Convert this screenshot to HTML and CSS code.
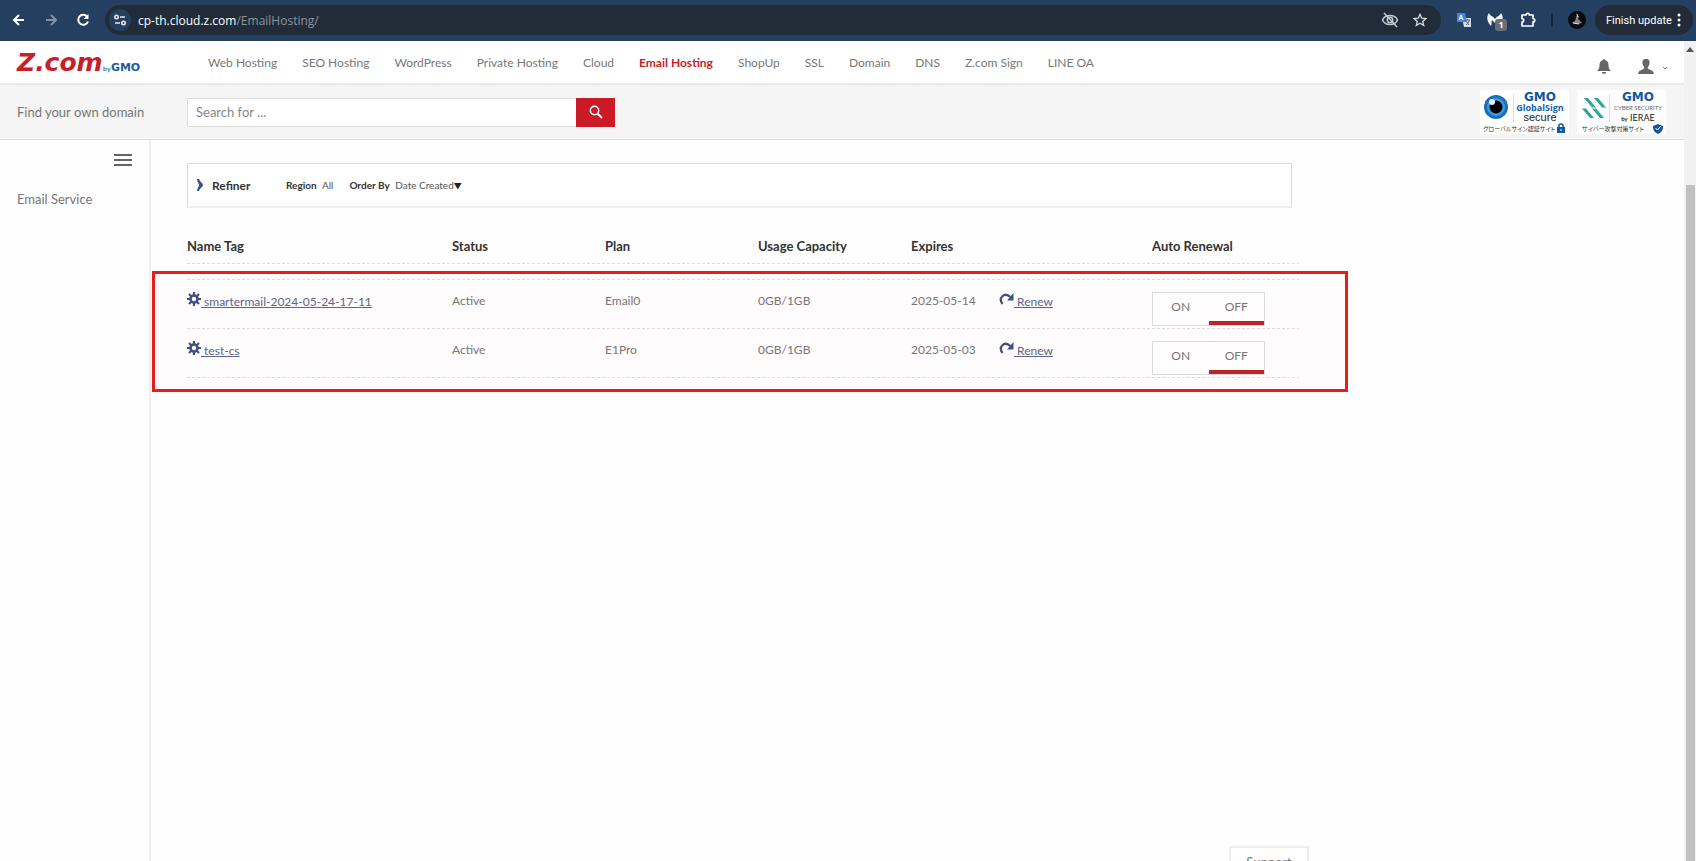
FILE: index.html
```html
<!doctype html>
<html lang="en">
	<head>
		<meta charset="UTF-8">
		<meta name="viewport" content="width=device-width, initial-scale=1.0">
		<title>Email Hosting</title>
		<link rel="stylesheet" href="styles.css">
	</head>

	<body>

		<!-- browser bar -->
		<div class="browser">
			<button type="button" class="bbtn" aria-label="Back"><svg width="14" height="14" viewBox="0 0 14 14"><path d="M12 7H2M7 2L2 7l5 5" fill="none" stroke="#fff" stroke-width="2"/></svg></button>
			<button type="button" class="bbtn" aria-label="Forward"><svg width="14" height="14" viewBox="0 0 14 14"><path d="M2 7h10M7 2l5 5-5 5" fill="none" stroke="#8493a6" stroke-width="2"/></svg></button>
			<button type="button" class="bbtn" aria-label="Reload"><svg width="14" height="14" viewBox="0 0 14 14"><path d="M12 8.500A5 5 0 1 1 11 3.500" fill="none" stroke="#fff" stroke-width="2"/><path d="M12.500 1v5h-5z" fill="#fff"/></svg></button>
			<div class="url">
				<span class="site"><svg width="14" height="14" viewBox="0 0 14 14" fill="none" stroke="#e3e8ee" stroke-width="1.600"><circle cx="3.500" cy="4" r="1.700"/><path d="M7 4h5M2 10h5"/><circle cx="10.500" cy="10" r="1.700"/></svg></span>
				<span class="address"><b>cp-th.cloud.z.com</b>/EmailHosting/</span>
				<svg width="18" height="18" viewBox="0 0 18 18" fill="none" stroke="#c3c9d0" stroke-width="1.500"><path d="M1.500 9C4 3 14 3 16.500 9 14 15 4 15 1.500 9z"/><circle cx="9" cy="9" r="2.700"/><path d="M3 2l13 14"/></svg>
				<svg width="14" height="14" viewBox="0 0 14 14"><path d="M7 1.300l1.700 3.900 4.200.4-3.200 2.800 1 4.100L7 10.300l-3.700 2.200 1-4.100L1.100 5.600l4.200-.4z" fill="none" stroke="#d5dae0" stroke-width="1.300"/></svg>
			</div>
			<div class="ext">
				<svg width="16" height="16" viewBox="0 0 16 16"><path d="M6 6h9v9H8z" fill="#d8dee8"/><path d="M1 1h8l2 9H1z" fill="#4a84e0"/><path d="M3 8l2-5 2 5M4 6.500h2" stroke="#fff" fill="none"/><path d="M9 8h5M11.500 7v1M13 8c0 3-2 4-3 5M10 9l3 4" stroke="#596579" fill="none"/></svg>
				<span class="mb">
					<svg width="16" height="14" viewBox="0 0 16 14"><path d="M2 0c1 3 4 3 6 6 2-3 5-3 6-6 3 4 2 9-2 13-1-2 0-4-1-6L8 10 5 7c-1 2 0 4-1 6C0 9-1 4 2 0z" fill="#f4f7fa"/></svg>
					<span class="count">1</span>
				</span>
				<svg width="16" height="16" viewBox="0 0 16 16"><path d="M2 3h4a1.700 1.700 0 0 1 3.400 0H13v3.500a1.700 1.700 0 0 1 0 3.400V14H2v-4a1.700 1.700 0 0 0 0-3.400z" fill="none" stroke="#fff" stroke-width="1.700" stroke-linejoin="round"/></svg>
				<span class="bar"></span>
				<svg width="18" height="18" viewBox="0 0 18 18"><circle cx="9" cy="9" r="9" fill="#0b0c12"/><path d="M9 3l2 3-1 2 4 4-4 1-6-1 3-2 1-3z" fill="#8e8284"/><path d="M9 3l1 3M5 12l6 1" stroke="#e4d9d2"/></svg>
			</div>
			<button type="button" class="update">Finish update
				<svg width="4" height="14" viewBox="0 0 4 14" fill="#fff"><circle cx="2" cy="2" r="1.500"/><circle cx="2" cy="7" r="1.500"/><circle cx="2" cy="12" r="1.500"/></svg>
			</button>
		</div>

		<div class="view">
		<div class="page">

			<header>
				<a href="#" class="logo"><span class="z">Z.com</span><span class="by">by</span><span class="gmo">GMO</span></a>
				<nav>
					<a href="#">Web Hosting</a>
					<a href="#">SEO Hosting</a>
					<a href="#">WordPress</a>
					<a href="#">Private Hosting</a>
					<a href="#">Cloud</a>
					<a href="#" class="active">Email Hosting</a>
					<a href="#">ShopUp</a>
					<a href="#">SSL</a>
					<a href="#">Domain</a>
					<a href="#">DNS</a>
					<a href="#">Z.com Sign</a>
					<a href="#">LINE OA</a>
				</nav>
				<div class="user">
					<button type="button" aria-label="Notifications"><svg width="14" height="15" viewBox="0 0 14 15" fill="#666"><path d="M7 0c1 0 1 1 1 1.200 3 .6 3.500 3 3.500 5.300 0 3 1 4 2.500 5.500H0C1.500 10.500 2.500 9.500 2.500 6.500 2.500 4.200 3 1.800 6 1.200 6 1 6 0 7 0zM5 13h4c0 2.600-4 2.600-4 0z"/></svg></button>
					<button type="button" aria-label="Account"><svg width="16" height="15" viewBox="0 0 16 15" fill="#666"><path d="M8 0c3 0 4 2 3.500 4.500C11.200 6.500 10.500 7.500 9.800 8v1.500c1 1 5.700 1.500 6.200 5.500H0c.5-4 5.200-4.500 6.200-5.500V8C5.500 7.500 4.800 6.500 4.500 4.500 4 2 5 0 8 0z"/></svg>
					<svg class="caret" width="6" height="4" viewBox="0 0 6 4"><path d="M1 1l2 2 2-2" fill="none" stroke="#888"/></svg></button>
				</div>
			</header>

			<form class="find">
				<label for="domain">Find your own domain</label>
				<input type="text" id="domain" placeholder="Search for ...">
				<button type="button" aria-label="Search"><svg width="14" height="14" viewBox="0 0 14 14" fill="none" stroke="#fff"><circle cx="5.500" cy="5.500" r="4.200" stroke-width="1.400"/><path d="M8.500 8.500l4.500 4.500" stroke-width="2"/></svg></button>
				<div class="seals">
					<svg width="89" height="44" viewBox="0 0 89 44">
						<rect width="89" height="44" fill="#fff"/>
						<circle cx="16" cy="17" r="12" fill="#1b6fb8"/><circle cx="16" cy="17" r="9" fill="#3d9be0"/><circle cx="16" cy="17" r="6.500" fill="#000"/><circle cx="12" cy="12" r="3" fill="#e8f5ff"/>
						<path d="M33.500 4v28" stroke="#ddd"/>
						<text x="60" y="11" class="s-gmo">GMO</text>
						<text x="60" y="21" class="s-sign">GlobalSign</text>
						<text x="60" y="31" class="s-secure">secure</text>
						<text x="3" y="41" class="s-jp">グローバルサイン認証サイト</text>
						<path d="M77 37h8v6h-8z" fill="#12589f"/><path d="M79 37v-1.500c0-2 4-2 4 0V37" fill="none" stroke="#12589f" stroke-width="1.500"/><path d="M81 39v2" stroke="#fff"/>
					</svg>
					<svg width="89" height="44" viewBox="0 0 89 44">
						<rect width="89" height="44" fill="#fff"/>
						<path d="M7 8h4l8 9.500h-4zM17 8h4l8 9.500h-4zM5 18.500h4l8 9.500h-4zM15 18.500h4l8 9.500h-4z" fill="#2ea3a0"/>
						<path d="M32.500 4v28" stroke="#ddd"/>
						<text x="61" y="11" class="s-gmo">GMO</text>
						<text x="61" y="20" class="s-cyber">CYBER SECURITY</text>
						<text x="61" y="31" class="s-ierae"><tspan class="s-by">by</tspan> IERAE</text>
						<text x="5" y="41" class="s-jp">サイバー攻撃対策サイト</text>
						<path d="M81 34l5 2c0 4-1 6-5 8-4-2-5-4-5-8z" fill="#12589f"/><path d="M78.500 38l2 2 3-3.500" fill="none" stroke="#fff"/>
					</svg>
				</div>
			</form>

			<div class="body">
				<aside>
					<button type="button" class="burger" aria-label="Menu"><svg width="18" height="12" viewBox="0 0 18 12"><path d="M0 1h18M0 6h18M0 11h18" stroke="#666" stroke-width="2"/></svg></button>
					<a href="#">Email Service</a>
				</aside>

				<main>
					<div class="refiner">
						<svg width="6" height="12" viewBox="0 0 6 12"><path d="M0 0h2c1 3 4 4 4 6s-3 3-4 6H0c0-3 2-4 2-6S0 3 0 0z" fill="#3b5190"/></svg>
						<strong>Refiner</strong>
						<span class="opt"><b>Region</b> <span>All</span></span>
						<span class="opt"><b>Order By</b> <span>Date Created<i>▼</i></span></span>
					</div>

					<div class="list">
						<table>
							<colgroup><col class="c-name"><col class="c-mid"><col class="c-mid"><col class="c-mid"><col class="c-exp"><col class="c-mid"><col></colgroup>
							<thead>
								<tr><th>Name Tag</th><th>Status</th><th>Plan</th><th>Usage Capacity</th><th>Expires</th><th></th><th>Auto Renewal</th></tr>
							</thead>
							<tbody>
								<tr class="gap"><td colspan="7"></td></tr>
								<tr>
									<td><a href="#"><svg width="14" height="14" viewBox="0 0 14 14"><circle cx="7" cy="7" r="3.500" fill="none" stroke="#3f5185" stroke-width="2.600"/><path d="M7 0v3M7 11v3M0 7h3M11 7h3M2 2l2.200 2.200M9.800 9.800L12 12M12 2L9.800 4.200M4.200 9.800L2 12" stroke="#3f5185" stroke-width="2.200"/></svg> smartermail-2024-05-24-17-11</a></td>
									<td>Active</td><td>Email0</td><td>0GB/1GB</td><td>2025-05-14</td>
									<td><a href="#"><svg width="15" height="14" viewBox="0 0 15 14"><path d="M3.500 12C-1 6 5-.5 11.500 5" fill="none" stroke="#3f5185" stroke-width="2.200"/><path d="M14.500 1v7.500H8z" fill="#3f5185"/></svg> Renew</a></td>
									<td><div class="toggle"><button type="button">ON</button><button type="button" class="on">OFF</button></div></td>
								</tr>
								<tr>
									<td><a href="#"><svg width="14" height="14" viewBox="0 0 14 14"><circle cx="7" cy="7" r="3.500" fill="none" stroke="#3f5185" stroke-width="2.600"/><path d="M7 0v3M7 11v3M0 7h3M11 7h3M2 2l2.200 2.200M9.800 9.800L12 12M12 2L9.800 4.200M4.200 9.800L2 12" stroke="#3f5185" stroke-width="2.200"/></svg> test-cs</a></td>
									<td>Active</td><td>E1Pro</td><td>0GB/1GB</td><td>2025-05-03</td>
									<td><a href="#"><svg width="15" height="14" viewBox="0 0 15 14"><path d="M3.500 12C-1 6 5-.5 11.500 5" fill="none" stroke="#3f5185" stroke-width="2.200"/><path d="M14.500 1v7.500H8z" fill="#3f5185"/></svg> Renew</a></td>
									<td><div class="toggle"><button type="button">ON</button><button type="button" class="on">OFF</button></div></td>
								</tr>
							</tbody>
						</table>
						<div class="mark"></div>
					</div>
				</main>
			</div>

		</div>

		<div class="scroll">
			<svg width="8" height="5" viewBox="0 0 8 5"><path d="M4 0l4 5H0z" fill="#555"/></svg>
			<div class="thumb"></div>
		</div>
		</div>

		<button type="button" class="support">Support</button>

	</body>
</html>
```

FILE: styles.css
```css
*{
	box-sizing:border-box;
}

body
{
	margin:0;
	height:100vh;
	display:flex;
	flex-direction:column;
	overflow:hidden;
	font-family:Lato, "Noto Sans CJK JP", sans-serif;
	font-size:13px;
	color:#777;
	background-color:#fefefe;
}

button
{
	font:inherit;
	color:inherit;
	background:none;
	border:0;
	padding:0;
}

a
{
	color:inherit;
	text-decoration:none;
}

svg
{
	flex:none;
}

/* browser bar */

.browser
{
	display:flex;
	align-items:center;
	height:41px;
	padding:0 3px 1px 12px;
	background-color:#243f60;
	font-family:"Open Sans", sans-serif;
	font-size:12px;
}

.bbtn
{
	display:flex;
	width:14px;
	margin-right:18px;
}

.url
{
	flex:1;
	display:flex;
	align-items:center;
	gap:14px;
	height:30px;
	margin-left:-3px;
	padding:0 14px 0 4px;
	border-radius:15px;
	background-color:#222c38;
}

.site
{
	display:flex;
	align-items:center;
	justify-content:center;
	width:22px;
	height:22px;
	margin-right:-7px;
	border-radius:50%;
	background-color:#243f60;
}

.address
{
	flex:1;
	color:#8b949e;
}

.address b
{
	font-weight:400;
	color:#fff;
}

.ext
{
	display:flex;
	align-items:center;
	gap:15px;
	margin:0 9px 0 15px;
}

.mb
{
	position:relative;
	display:flex;
	width:18px;
}

.count
{
	position:absolute;
	left:8px;
	top:6px;
	width:12px;
	height:12px;
	border-radius:3px;
	background-color:#6a6d71;
	color:#fff;
	font-size:9px;
	font-weight:700;
	line-height:12px;
	text-align:center;
}

.bar
{
	width:2px;
	height:14px;
	background-color:#14263c;
}

.update
{
	display:flex;
	align-items:center;
	justify-content:space-between;
	width:98px;
	height:30px;
	padding:0 12px 0 11px;
	border-radius:15px;
	background-color:#222c38;
	color:#fff;
	font-family:Roboto, sans-serif;
	font-size:11px;
	white-space:nowrap;
}

/* page and its scroll bar */

.view
{
	flex:1;
	display:flex;
	min-height:0;
}

.page
{
	flex:1;
	display:flex;
	flex-direction:column;
}

.scroll
{
	display:flex;
	flex-direction:column;
	align-items:center;
	width:12px;
	padding-top:6px;
	background-color:#f1f1f1;
}

.thumb
{
	flex:1;
	width:9px;
	margin-top:133px;
	background-color:#c1c1c1;
}

header
{
	display:flex;
	align-items:center;
	height:44px;
	padding:0 16px 0 17px;
	border-bottom:2px solid #ebebeb;
	background-color:#fff;
}

.logo
{
	display:flex;
	align-items:baseline;
	width:191px;
	font-family:"DejaVu Sans", sans-serif;
	font-weight:700;
}

.z
{
	font-size:25px;
	font-style:italic;
	color:#c8202a;
}

.by
{
	font-size:6px;
	color:#5b8fc0;
}

.gmo
{
	font-size:11px;
	color:#1d5c9c;
}

nav
{
	flex:1;
	display:flex;
	gap:25px;
	font-size:12px;
	white-space:nowrap;
}

.active
{
	color:#c21f26;
	font-weight:700;
}

.user
{
	display:flex;
	gap:27px;
	padding-top:8px;
}

.user button
{
	display:flex;
	align-items:center;
}

.caret
{
	margin-left:8px;
	margin-top:4px;
}

.find
{
	display:flex;
	align-items:center;
	height:55px;
	padding:0 18px 0 17px;
	border-bottom:1px solid #ddd;
	background-color:#f5f5f5;
}

.find label
{
	width:170px;
}

.find input
{
	width:389px;
	height:29px;
	padding:0 8px;
	border:1px solid #ddd;
	border-right:0;
	background-color:#fff;
	font:inherit;
}

.find input::placeholder
{
	color:#888;
}

.find button
{
	display:flex;
	align-items:center;
	justify-content:center;
	width:39px;
	height:29px;
	background-color:#cb1a26;
}

.seals
{
	display:flex;
	gap:8px;
	margin-left:auto;
}

.s-gmo, .s-sign, .s-secure, .s-cyber, .s-ierae
{
	text-anchor:middle;
}

.s-gmo
{
	font:700 12px "DejaVu Sans", sans-serif;
	fill:#12589f;
}

.s-sign
{
	font:700 9px "Open Sans", sans-serif;
	fill:#1763ad;
}

.s-secure
{
	font:11px "Liberation Sans", sans-serif;
	fill:#222;
}

.s-cyber
{
	font:6px Lato, sans-serif;
	fill:#666;
}

.s-ierae
{
	font:9px Lato, sans-serif;
	fill:#222;
}

.s-by
{
	font-size:6px;
	font-weight:700;
}

.s-jp
{
	font:6px "Noto Sans CJK JP", sans-serif;
	font-feature-settings:"palt";
	fill:#333;
}

/* side menu */

.body
{
	flex:1;
	display:flex;
}

aside
{
	display:flex;
	flex-direction:column;
	width:151px;
	padding:14px 17px;
	border-right:2px solid #eee;
}

.burger
{
	display:flex;
	align-self:flex-end;
	margin-bottom:25px;
}

/* service list */

main
{
	flex:1;
	max-width:1148px;
	padding:23px 0 0 36px;
}

.refiner
{
	display:flex;
	align-items:center;
	height:45px;
	margin-right:7px;
	padding-left:9px;
	border:1px solid #ddd;
	border-bottom:2px solid #eee;
	background-color:#fff;
	font-size:10px;
	color:#555;
}

.refiner strong
{
	width:74px;
	margin-left:9px;
	font-size:12px;
	color:#333;
}

.opt
{
	margin-right:16px;
}

.opt b
{
	margin-right:3px;
	color:#333;
}

.opt i
{
	font-style:normal;
	font-size:8px;
	color:#222;
}

.list
{
	position:relative;
	margin-top:20px;
}

table
{
	width:100%;
	table-layout:fixed;
	border-collapse:collapse;
}

.c-name
{
	width:265px;
}

.c-mid
{
	width:153px;
}

.c-exp
{
	width:88px;
}

/* one dashed line under each row, unbroken between the cells */
tr
{
	background:repeating-linear-gradient(90deg, #ddd 0 3px, transparent 3px 5px) bottom / 100% 1px no-repeat;
}

th
{
	height:36px;
	padding:0;
	text-align:left;
	color:#333;
}

td
{
	height:49px;
	padding:12px 0 0;
	vertical-align:top;
	font-size:12px;
	line-height:18px;
}

.gap td
{
	height:16px;
	padding:0;
}

td a
{
	color:#5a6789;
	text-decoration:underline;
}

.toggle
{
	display:flex;
	width:113px;
	height:34px;
	border:1px solid #ddd;
	background-color:#fff;
}

.toggle button
{
	flex:1;
	border-bottom:4px solid transparent;
}

.toggle .on
{
	border-bottom-color:#b9252e;
}

/* red frame over the rows */

.mark
{
	position:absolute;
	top:43px;
	bottom:-14px;
	left:-35px;
	right:-49px;
	border:3px solid #ec1c1c;
	background-color:rgba(255,0,60,0.007);
	pointer-events:none;
}

.support
{
	position:fixed;
	right:387px;
	bottom:-16px;
	width:80px;
	height:31px;
	border:2px solid #eee;
	background-color:#fff;
}
```
